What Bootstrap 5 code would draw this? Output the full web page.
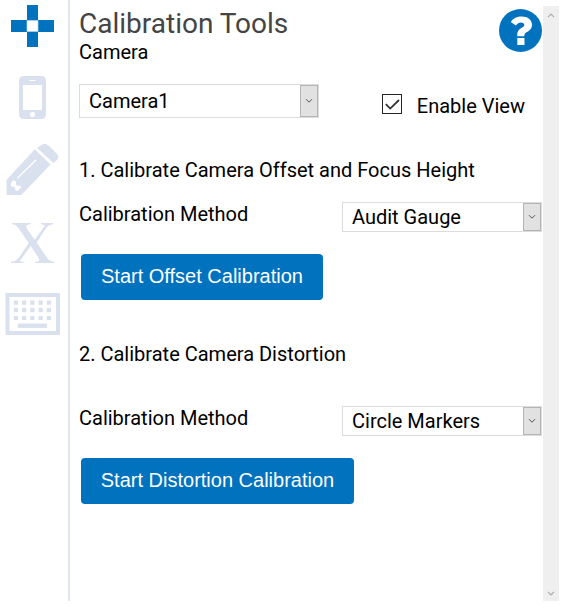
<!DOCTYPE html>
<html lang="en">
<head>
<meta charset="utf-8">
<meta name="viewport" content="width=device-width, initial-scale=1">
<title>Calibration Tools</title>
<link href="https://cdn.jsdelivr.net/npm/bootstrap@5.3.0/dist/css/bootstrap.min.css" rel="stylesheet">
<style>
body{font-family:Roboto,"Liberation Sans",sans-serif;font-size:20px;line-height:24px;color:#000;background:#fff;height:609px;overflow:hidden}
.app-shell{height:601px}
.tool-rail{width:70px;border-right:2px solid #dfe6f0;flex:none;color:#d9e1ef}
.tool-rail svg{display:block;fill:currentColor}
.tool-rail a{color:inherit;display:block}
.tool-rail a.current{color:#0072be}
.i-move{margin:5px 0 0 11px}
.i-phone{margin:29px 0 0 19px}
.i-pencil{margin:25px 0 0 6px}
.i-x{margin:28px 0 0 11px}
.i-keys{margin:30px 0 0 5px}
.panel-main{padding:7px 0 0 9px}
.panel-head{height:57px}
.panel-title{font-size:28px;line-height:33px;color:#444;font-weight:400}
.help-btn{margin:2px 1px 0 0;width:43px;height:43px}
.camera-line{height:34px;margin-top:20px}
.pick{border:1px solid #dcdcdc;background:#fff;color:#000;padding:0 0 0 9px;border-radius:0;width:200px;height:30px;font-size:20px;line-height:24px}
.pick-camera{width:240px;height:34px}
.pick-arrow{width:18px;background:#e1e1e1;border:1px solid #b4b4b4;flex:none}
.view-check{margin:10px 18px 0 0}
.view-box{width:20px;height:20px;border:1px solid #222;margin-right:15px}
.offset-part{margin-top:40px}
.distort-part{margin-top:42px}
.method-row{height:30px;margin:20px 1px 0 0}
.distort-part .method-row{margin-top:40px}
.act{background:#0072be;border:0;border-radius:4px;color:#fff;font:20px/24px "Liberation Sans",Arial,sans-serif;height:46px;padding:0 0 2px;margin:22px 0 0 2px}
.act:hover{background:#0067ab;color:#fff}
.act-offset{width:242px}
.act-distort{width:273px}
.scroll-rail{width:16px;margin:6px 7px 0 0;background:#efefef;flex:none;padding:7px 0 5px}
</style>
<script src="https://cdn.jsdelivr.net/npm/bootstrap@5.3.0/dist/js/bootstrap.bundle.min.js"></script>
</head>
<body>
<div class="app-shell d-flex">
  <nav class="tool-rail d-flex flex-column align-items-start">
    <a class="i-move current" href="#" aria-label="Calibration"><svg width="43" height="42" viewBox="0 0 43 42"><path d="M16 0h11v15h16v12H27v15H16V27H0V15h16z"/><path fill="#fff" stroke="#b8d3ea" stroke-width=".7" d="M16 15.500h11v11H16z"/></svg></a>
    <a class="i-phone" href="#" aria-label="Phone"><svg width="27" height="43" viewBox="0 0 27 43"><path fill-rule="evenodd" d="M5 0h17q5 0 5 5v33q0 5-5 5H5q-5 0-5-5V5q0-5 5-5zM4 9v25h19V9zM10.500 4v1h6V4zM13.500 36a2.600 2.600 0 1 0 0 5.200 2.600 2.600 0 1 0 0-5.200z"/></svg></a>
    <a class="i-pencil" href="#" aria-label="Edit"><svg width="53" height="51" viewBox="0 0 53 51"><path d="M32 3.200 35.500 1q4-2.500 7.700 1l7 7q3.500 3.500 1 6.800l-3.700 3.300L31 4z"/><path d="M28.800 5.200 44.500 20.500 15.300 51H.5V36z"/><path fill="none" stroke="#fff" stroke-width="1.300" d="M11.300 34.200 30 16"/><path fill="#fff" d="M6.700 36.200 10 37.500v3.700l4.700.8.600 1.300-4 3.700-2-.7-.6-3.400-3.400-.4-.6-2.300z"/></svg></a>
    <a class="i-x" href="#" aria-label="Variable"><svg width="44" height="40" viewBox="0 0 44 40"><path d="M1 0h18.500v1.300q-6 .2-3.700 4.100l8.500 12.300L32.500 7q3.800-5.500-2.500-5.700V0h12v1.300q-4.500.3-8.500 5L25.800 19.700l9.800 14.500q3 4.300 7.900 4.600V40H24v-1.200q6-.2 3.400-4.200L19 22 9.500 33.500q-3.500 5 3 5.300V40H0v-1.200q4.500-.3 8.500-4.800l9.200-14L7.900 5.700Q5 1.500 1 1.300z"/><path fill="none" stroke="currentColor" stroke-width="2.600" d="M8 37 19.500 21M24 18.500 34.500 4M11 4l22 32"/></svg></a>
    <a class="i-keys" href="#" aria-label="Keyboard"><svg width="55" height="43" viewBox="0 0 55 43"><path fill-rule="evenodd" d="M.5 0H55v42H.5zM4.500 4v34h46.500V4z"/><path fill="none" stroke="currentColor" stroke-width="4.200" stroke-dasharray="4.200 4.050" d="M8.800 9.600H46M8.800 17.200H46M8.800 25H46"/><path d="M12.800 30.500h29.200v4.400H12.800z"/></svg></a>
  </nav>

  <main class="panel-main flex-grow-1">
    <header class="panel-head d-flex justify-content-between align-items-start">
      <div>
        <h1 class="panel-title m-0">Calibration Tools</h1>
        <div>Camera</div>
      </div>
      <svg class="help-btn" viewBox="0 0 43 43" role="img" aria-label="Help"><circle cx="21.500" cy="21.500" r="21.500" fill="#0072be"/><path fill="#fff" d="M11.800 13C14.500 9 18 7.500 22.500 7.500 29 7.500 33 11 33 15.700c0 3.800-2.300 5.700-5 7.300-2 1.200-2.700 2-2.700 4.300h-7v-1.500c0-4 2-5.500 4.500-7 1.700-1 2.500-1.700 2.500-2.800 0-1.500-1.200-2.500-3.200-2.500-2.200 0-3.400.8-5.200 3z"/><path fill="#fff" d="M18.300 29h7.200v7h-7.200z"/></svg>
    </header>

    <div class="camera-line d-flex justify-content-between align-items-start">
      <button class="pick pick-camera d-flex align-items-stretch text-start" type="button"><span class="flex-grow-1 align-self-center">Camera1</span><span class="pick-arrow d-flex align-items-center justify-content-center"><svg width="8" height="6" viewBox="0 0 8 6"><path d="m1 1.200 3 3 3-3" fill="none" stroke="#555"/></svg></span></button>
      <label class="view-check d-flex"><span class="view-box d-flex"><svg width="18" height="18" viewBox="0 0 18 18"><path d="m2.800 9.200 4.400 4.400L16 5" fill="none" stroke="#333" stroke-width="1.800"/></svg></span><span>Enable View</span></label>
    </div>

    <section class="offset-part">
      <div>1. Calibrate Camera Offset and Focus Height</div>
      <div class="method-row d-flex justify-content-between">
        <span>Calibration Method</span>
        <button class="pick d-flex align-items-stretch text-start" type="button"><span class="flex-grow-1 align-self-center">Audit Gauge</span><span class="pick-arrow d-flex align-items-center justify-content-center"><svg width="8" height="6" viewBox="0 0 8 6"><path d="m1 1.200 3 3 3-3" fill="none" stroke="#555"/></svg></span></button>
      </div>
      <button class="btn act act-offset" type="button">Start Offset Calibration</button>
    </section>

    <section class="distort-part">
      <div>2. Calibrate Camera Distortion</div>
      <div class="method-row d-flex justify-content-between">
        <span>Calibration Method</span>
        <button class="pick d-flex align-items-stretch text-start" type="button"><span class="flex-grow-1 align-self-center">Circle Markers</span><span class="pick-arrow d-flex align-items-center justify-content-center"><svg width="8" height="6" viewBox="0 0 8 6"><path d="m1 1.200 3 3 3-3" fill="none" stroke="#555"/></svg></span></button>
      </div>
      <button class="btn act act-distort" type="button">Start Distortion Calibration</button>
    </section>
  </main>

  <div class="scroll-rail d-flex flex-column justify-content-between align-items-center">
    <svg width="8" height="5" viewBox="0 0 8 5"><path d="m1 4.200 3-3 3 3" fill="none" stroke="#aaa" stroke-width="1.200"/></svg>
    <svg width="8" height="5" viewBox="0 0 8 5"><path d="m1 .8 3 3 3-3" fill="none" stroke="#aaa" stroke-width="1.200"/></svg>
  </div>
</div>
</body>
</html>
